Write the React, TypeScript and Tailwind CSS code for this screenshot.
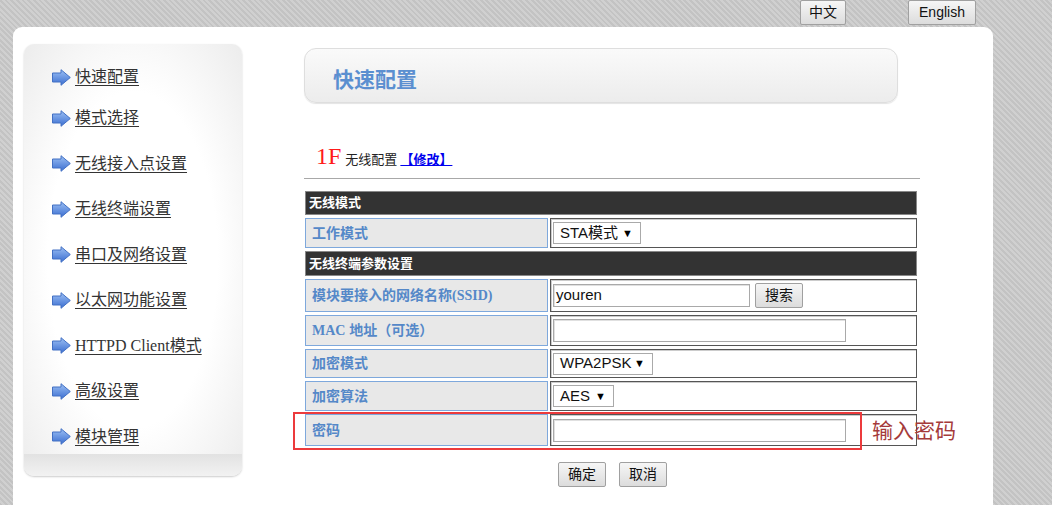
import React from "react";

const navItems = [
  "快速配置",
  "模式选择",
  "无线接入点设置",
  "无线终端设置",
  "串口及网络设置",
  "以太网功能设置",
  "HTTPD Client模式",
  "高级设置",
  "模块管理",
];

function ArrowIcon() {
  return (
    <svg width="19" height="17" viewBox="0 0 19 17" className="shrink-0">
      <defs>
        <linearGradient id="arr" x1="0" y1="0" x2="0" y2="1">
          <stop offset="0" stopColor="#9cc0f4" />
          <stop offset="1" stopColor="#3a6dd0" />
        </linearGradient>
      </defs>
      <polygon
        points="0.5,4 9,4 9,0.7 18.3,8.5 9,16.3 9,13 0.5,13"
        fill="url(#arr)"
        stroke="#4270c4"
        strokeWidth="1"
        strokeLinejoin="round"
      />
    </svg>
  );
}

function FakeSelect({ label, width }: { label: string; width: string }) {
  return (
    <div
      className={`flex h-[22px] items-center justify-between border border-[#aaa] bg-white pl-[6px] pr-[7px] text-[15px] text-[#111] ${width}`}
    >
      <span>{label}</span>
      <span className="text-[11px] text-black">▼</span>
    </div>
  );
}

function TextBox({ value, width }: { value?: string; width: string }) {
  return (
    <div
      className={`flex h-[23px] items-center border border-[#a9a9a9] bg-white px-[2px] text-[15px] text-[#111] shadow-[inset_1px_1px_0_#e0e0e0] ${width}`}
    >
      {value}
    </div>
  );
}

function GrayButton({ children, width }: { children: React.ReactNode; width: string }) {
  return (
    <div
      className={`flex h-[25px] items-center justify-center rounded-[2px] border border-[#a0a0a0] bg-[linear-gradient(#f6f6f6,#dcdcdc)] text-[14px] text-[#111] ${width}`}
    >
      {children}
    </div>
  );
}

function SectionRow({ title, h }: { title: string; h: string }) {
  return (
    <tr>
      <td
        colSpan={2}
        className={`border border-[#888] bg-[#333] pl-[3px] align-middle text-[13px] font-bold text-white ${h}`}
      >
        {title}
      </td>
    </tr>
  );
}

function FieldRow({ label, h, children }: { label: React.ReactNode; h: string; children: React.ReactNode }) {
  return (
    <tr>
      <td
        className={`w-[243px] border border-[#7ea8dc] bg-[#e8e8e8] pl-[6px] align-middle text-[14px] font-bold text-[#5588c8] ${h}`}
      >
        {label}
      </td>
      <td className={`border border-[#555] bg-white pl-[2px] align-middle shadow-[inset_1px_1px_0_#ccc] ${h}`}>
        {children}
      </td>
    </tr>
  );
}

export default function App() {
  return (
    <div className="h-[505px] w-[1052px] overflow-hidden bg-[repeating-linear-gradient(45deg,#c3c3c3_0px,#c3c3c3_2px,#d0d0d0_2px,#d0d0d0_4px)] font-['Liberation_Sans','Noto_Sans_CJK_SC',sans-serif]">
      {/* language bar */}
      <div className="flex h-[27px] pl-[800px]">
        <GrayButton width="w-[46px] h-[24px]">中文</GrayButton>
        <div className="w-[62px]" />
        <GrayButton width="w-[68px] h-[24px]">English</GrayButton>
      </div>

      {/* main panel */}
      <div className="ml-[13px] flex h-[478px] w-[980px] rounded-t-[9px] bg-white pl-[11px] pt-[17px]">
        {/* sidebar */}
        <div className="flex h-[432px] w-[218px] flex-col overflow-hidden rounded-[10px] bg-[radial-gradient(ellipse_at_center,#ffffff_55%,#ececec_100%)] shadow-[0_1px_2px_#ccc]">
          <div className="flex flex-1 flex-col pl-[28px] pt-[21px] font-['Liberation_Serif','Noto_Sans_CJK_SC',serif]">
            {navItems.map((item, i) => (
              <div
                key={item}
                className={`flex h-[24px] items-center gap-[4px] ${i === 0 ? "" : i === 1 ? "mt-[17px]" : "mt-[21.5px]"}`}
              >
                <ArrowIcon />
                <span className="text-[16px] text-[#333] underline underline-offset-[3px]">{item}</span>
              </div>
            ))}
          </div>
          <div className="h-[22px] bg-[linear-gradient(#e2e2e2,#f2f2f2)]" />
        </div>

        {/* content */}
        <div className="ml-[62px] flex w-[616px] flex-col pt-[4px]">
          <div className="flex h-[55px] w-[594px] items-center rounded-[12px] border border-[#dedede] bg-[linear-gradient(#fafafa,#ececec)] pl-[28px] pt-[9px] shadow-[0_1px_1px_#e4e4e4]">
            <span className="text-[21px] font-bold text-[#5b8fd0]">快速配置</span>
          </div>

          <div className="mt-[35px] flex h-[28px] items-baseline pl-[12px]">
            <span className="font-['Liberation_Serif',serif] text-[24px] text-[#ff1a1a]">1F</span>
            <span className="ml-[4px] text-[13px] text-[#222]">无线配置</span>
            <span className="ml-[3px] text-[13px] font-bold text-[#0000ee] underline">【修改】</span>
          </div>

          <div className="mt-[12px] h-[2px] w-[616px] border-t border-[#a8a8a8] bg-white" />

          <div className="relative ml-[-1px] mt-[8px] w-[616px]">
            <table className="w-[616px] border-separate border-spacing-x-[2px] border-spacing-y-[3px]">
              <tbody>
                <SectionRow title="无线模式" h="h-[24px]" />
                <FieldRow label="工作模式" h="h-[30px]">
                  <FakeSelect label="STA模式" width="w-[88px]" />
                </FieldRow>
                <SectionRow title="无线终端参数设置" h="h-[25px]" />
                <FieldRow
                  label={
                    <span>
                      模块要接入的网络名称<span className="font-['Liberation_Serif',serif]">(SSID)</span>
                    </span>
                  }
                  h="h-[33px]"
                >
                  <div className="flex items-center gap-[5px]">
                    <TextBox value="youren" width="w-[197px]" />
                    <GrayButton width="w-[48px] h-[24px]">搜索</GrayButton>
                  </div>
                </FieldRow>
                <FieldRow
                  label={
                    <span>
                      <span className="font-['Liberation_Serif',serif]">MAC</span> 地址（可选）
                    </span>
                  }
                  h="h-[31px]"
                >
                  <TextBox width="w-[293px]" />
                </FieldRow>
                <FieldRow label="加密模式" h="h-[29px]">
                  <FakeSelect label="WPA2PSK" width="w-[100px]" />
                </FieldRow>
                <FieldRow label="加密算法" h="h-[30px]">
                  <FakeSelect label="AES" width="w-[61px]" />
                </FieldRow>
                <FieldRow label="密码" h="h-[32px]">
                  <TextBox width="w-[293px]" />
                </FieldRow>
              </tbody>
            </table>

            {/* highlight overlay */}
            <div className="absolute left-[-10px] top-[224px] h-[38px] w-[569px] border-2 border-[#ec3a3c]" />
            <div className="absolute left-[569px] top-[230px] whitespace-nowrap text-[21px] leading-[26px] text-[#a53a3a]">
              输入密码
            </div>
          </div>

          <div className="mt-[13px] flex gap-[13px] pl-[254px]">
            <GrayButton width="w-[48px]">确定</GrayButton>
            <GrayButton width="w-[48px]">取消</GrayButton>
          </div>
        </div>
      </div>
    </div>
  );
}
